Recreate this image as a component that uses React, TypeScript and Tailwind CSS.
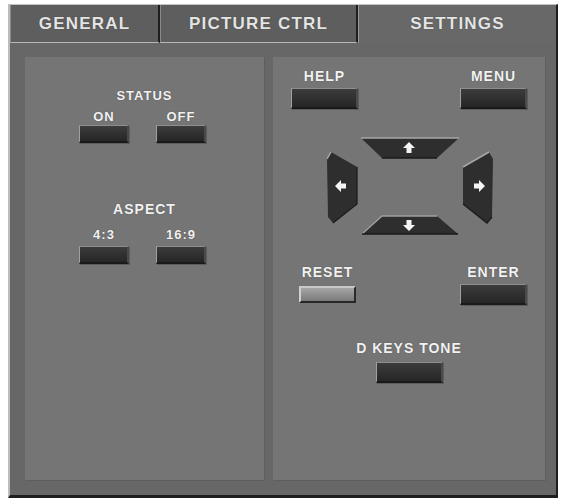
import React from "react"

const font = { fontFamily: '"Liberation Sans", Arial, sans-serif' }

function DarkButton({ w = 67, h = 21 }: { w?: number; h?: number }) {
  return (
    <div
      className="bg-gradient-to-b from-[#3c3c3c] to-[#262626] border-t border-l border-t-[#8e8e8e] border-l-[#a0a0a0] border-r-2 border-b-2 border-r-[#4a4a4a] border-b-[#1a1a1a] shadow-[1px_1px_0_#5c5c5c]"
      style={{ width: w, height: h }}
    />
  )
}

function Label({ text, size = "text-[14px]" }: { text: string; size?: string }) {
  return (
    <span className={`${size} leading-[16px] font-bold text-[#f2f2f2] tracking-[1px] [text-shadow:0_0_1px_#444]`}>
      {text}
    </span>
  )
}

function Tab({ name, active, w }: { name: string; active?: boolean; w?: string }) {
  return (
    <div
      className={
        active
          ? "flex-1 flex items-center justify-center bg-[#686868] border-l border-l-[#9a9a9a]"
          : `${w} flex items-center justify-center bg-[#5e5e5e] border-b border-b-[#b8b8b8] border-l border-l-[#8a8a8a] border-r-2 border-r-[#1e1e1e]`
      }
    >
      <span className="text-[17px] font-bold tracking-[1.2px] text-[#e4e4e4] [text-shadow:0_0_1px_#333]">{name}</span>
    </div>
  )
}

function DPad() {
  return (
    <svg width="166" height="100" viewBox="0 0 166 100">
      {/* up */}
      <polygon points="34,1 132,1 110,21 55,21" fill="#2e2e2e" />
      <polyline points="34,1 132,1" stroke="#a8a8a8" strokeWidth="1.5" fill="none" />
      <polyline points="110,21 55,21" stroke="#1a1a1a" strokeWidth="1.5" fill="none" />
      {/* down */}
      <polygon points="55,79 110,79 131,97 35,97" fill="#2e2e2e" />
      <polyline points="35,97 55,79 110,79" stroke="#a0a0a0" strokeWidth="1.3" fill="none" />
      <polyline points="131,97 35,97" stroke="#1a1a1a" strokeWidth="1.5" fill="none" />
      {/* left */}
      <polygon points="4,15 30,30 30,67 6,86 1,80 0,22" fill="#2e2e2e" />
      <polyline points="0,22 4,15" stroke="#a8a8a8" strokeWidth="1.5" fill="none" />
      <polyline points="30,30 30,67 6,86" stroke="#1c1c1c" strokeWidth="1.3" fill="none" />
      {/* right */}
      <polygon points="162,15 136,30 136,67 160,86 165,80 166,22" fill="#2e2e2e" />
      <polyline points="136,30 162,15" stroke="#a8a8a8" strokeWidth="1.5" fill="none" />
      <polyline points="136,67 160,86 165,80" stroke="#1c1c1c" strokeWidth="1.3" fill="none" />
      {/* arrows */}
      <path d="M82,5 L88,11 L84.5,11 L84.5,16 L79.5,16 L79.5,11 L76,11 Z" fill="#f4f4f4" />
      <path d="M82,94 L88,88 L84.5,88 L84.5,83 L79.5,83 L79.5,88 L76,88 Z" fill="#f4f4f4" />
      <path d="M8,49 L14,43 L14,46.5 L19,46.5 L19,51.5 L14,51.5 L14,55 Z" fill="#f4f4f4" />
      <path d="M158,49 L152,43 L152,46.5 L147,46.5 L147,51.5 L152,51.5 L152,55 Z" fill="#f4f4f4" />
    </svg>
  )
}

export default function App() {
  return (
    <div className="w-[562px] h-[498px] bg-white pl-[8px] pt-[4px] flex" style={font}>
      <div className="w-[550px] h-[494px] flex flex-col bg-[#676767] border-t border-t-[#c4c4c4] border-l-2 border-l-[#bdbdbd] border-r-2 border-r-[#1e1e1e] border-b-[3px] border-b-[#1e1e1e]">
        <div className="h-[38px] flex">
          <Tab name="GENERAL" w="w-[150px]" />
          <Tab name="PICTURE CTRL" w="w-[198px]" />
          <Tab name="SETTINGS" active />
        </div>

        <div className="flex-1 flex pl-[15px] pr-[11px] pt-[14px] pb-[15px] gap-[9px]">
          {/* left panel */}
          <div className="w-[239px] bg-[#757575] flex flex-col items-center pt-[31px] shadow-[1px_1px_0_#5e5e5e]">
            <Label text="STATUS" size="text-[13px]" />
            <div className="flex gap-[27px] mt-[5px] pr-[4px]">
              <div className="flex flex-col items-center">
                <Label text="ON" size="text-[13px]" />
                <DarkButton w={50} h={18} />
              </div>
              <div className="flex flex-col items-center">
                <Label text="OFF" size="text-[13px]" />
                <DarkButton w={50} h={18} />
              </div>
            </div>
            <div className="mt-[54px]">
              <Label text="ASPECT" />
            </div>
            <div className="flex gap-[27px] mt-[6px] pr-[4px]">
              <div className="flex flex-col items-center gap-[3px]">
                <Label text="4:3" size="text-[13px]" />
                <DarkButton w={50} h={18} />
              </div>
              <div className="flex flex-col items-center gap-[3px]">
                <Label text="16:9" size="text-[13px]" />
                <DarkButton w={50} h={18} />
              </div>
            </div>
          </div>

          {/* right panel */}
          <div className="w-[272px] bg-[#757575] flex flex-col pt-[11px] px-[18px] shadow-[1px_1px_0_#5e5e5e]">
            <div className="flex justify-between">
              <div className="flex flex-col items-center gap-[4px]">
                <Label text="HELP" />
                <DarkButton />
              </div>
              <div className="flex flex-col items-center gap-[4px]">
                <Label text="MENU" />
                <DarkButton />
              </div>
            </div>
            <div className="flex justify-center mt-[28px] pl-[2px]">
              <DPad />
            </div>
            <div className="flex justify-between mt-[27px]">
              <div className="flex flex-col items-center gap-[4px] pl-[8px]">
                <Label text="RESET" />
                <div className="mt-[2px] w-[57px] h-[17px] bg-gradient-to-b from-[#a6a6a6] to-[#7a7a7a] border-t-2 border-l-2 border-t-[#c8c8c8] border-l-[#d0d0d0] border-r-2 border-b-2 border-r-[#2a2a2a] border-b-[#262626]" />
              </div>
              <div className="flex flex-col items-center gap-[4px]">
                <Label text="ENTER" />
                <DarkButton />
              </div>
            </div>
            <div className="flex flex-col items-center gap-[6px] mt-[35px]">
              <Label text="D KEYS TONE" />
              <DarkButton />
            </div>
          </div>
        </div>
      </div>
    </div>
  )
}
